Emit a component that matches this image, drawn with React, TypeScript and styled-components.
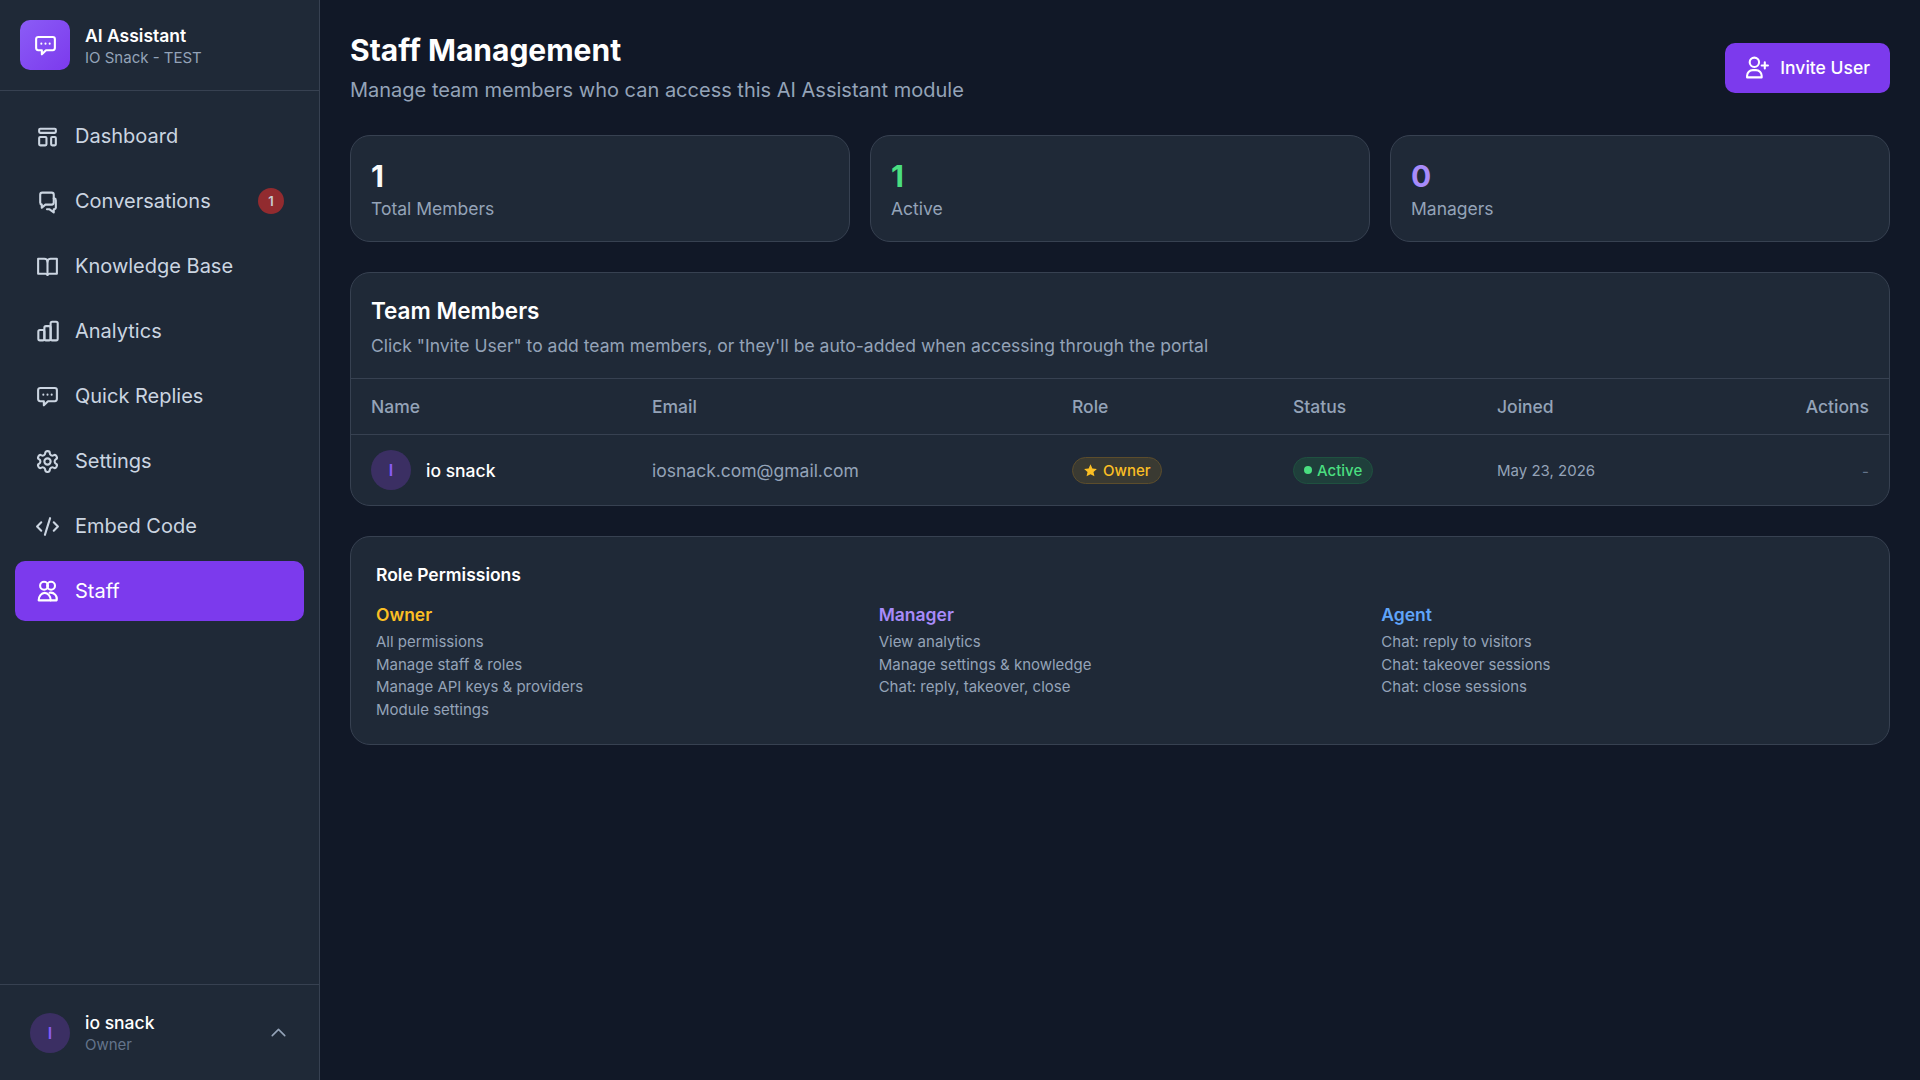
import React from 'react';
import styled, { createGlobalStyle } from 'styled-components';

const GlobalStyle = createGlobalStyle`
  html, body {
    margin: 0;
    padding: 0;
    height: 100%;
    background: #111827;
  }
  * {
    box-sizing: border-box;
  }
  body {
    font-family: Inter, "Liberation Sans", sans-serif;
    color: #f9fafb;
  }
`;

const Layout = styled.div`
  width: 100%;
  height: 1080px;
  display: flex;
  overflow: hidden;
  background: #111827;
`;

const Sidebar = styled.aside`
  width: 320px;
  flex-shrink: 0;
  height: 100%;
  display: flex;
  flex-direction: column;
  background: #1f2937;
  border-right: 1px solid #374151;
`;

const Brand = styled.div`
  height: 91px;
  padding: 20px;
  display: flex;
  align-items: center;
  gap: 15px;
  border-bottom: 1px solid #374151;
`;

const BrandLogo = styled.div`
  width: 50px;
  height: 50px;
  border-radius: 10px;
  display: flex;
  align-items: center;
  justify-content: center;
  color: #fff;
  background: linear-gradient(135deg, #8b5cf6, #7c3aed);
`;

const BrandText = styled.div`
  display: flex;
  flex-direction: column;
  padding-top: 3px;
`;

const BrandName = styled.span`
  font-size: 17.5px;
  line-height: 22px;
  font-weight: 600;
  color: #fff;
`;

const BrandSub = styled.span`
  font-size: 15px;
  line-height: 22px;
  color: #94a3b8;
`;

const Nav = styled.nav`
  flex: 1;
  padding: 15px;
  display: flex;
  flex-direction: column;
  gap: 5px;
`;

const NavItem = styled.a<{ $active?: boolean }>`
  height: 60px;
  padding: 0 20px;
  display: flex;
  align-items: center;
  gap: 15px;
  border-radius: 10px;
  font-size: 20px;
  color: ${({ $active }) => ($active ? '#fff' : '#cbd5e1')};
  background: ${({ $active }) => ($active ? '#7c3aed' : 'transparent')};
  & svg {
    flex-shrink: 0;
  }
`;

const NavLabel = styled.span`
  flex: 1;
`;

const NavBadge = styled.span`
  width: 26px;
  height: 26px;
  border-radius: 50%;
  display: flex;
  align-items: center;
  justify-content: center;
  font-size: 13px;
  font-weight: 600;
  color: #c8ccd2;
  background: #922b2f;
`;

const UserBar = styled.div`
  height: 96px;
  padding: 0 28px 0 30px;
  display: flex;
  align-items: center;
  gap: 15px;
  border-top: 1px solid #374151;
`;

const Avatar = styled.div`
  width: 40px;
  height: 40px;
  border-radius: 50%;
  flex-shrink: 0;
  display: flex;
  align-items: center;
  justify-content: center;
  font-size: 16px;
  font-weight: 600;
  color: #8b5cf6;
  background: #3b2f63;
`;

const UserText = styled.div`
  flex: 1;
  display: flex;
  flex-direction: column;
  padding-top: 2px;
`;

const UserName = styled.span`
  font-size: 17.5px;
  line-height: 22px;
  font-weight: 500;
  color: #fff;
`;

const UserRole = styled.span`
  font-size: 15px;
  line-height: 22px;
  color: #64748b;
`;

const Main = styled.main`
  flex: 1;
  padding: 30px;
  display: flex;
  flex-direction: column;
`;

const PageHeader = styled.header`
  display: flex;
  justify-content: space-between;
  align-items: center;
  height: 75px;
  margin-bottom: 30px;
`;

const TitleBlock = styled.div`
  display: flex;
  flex-direction: column;
  gap: 5px;
`;

const Title = styled.h1`
  margin: 0;
  font-size: 30px;
  line-height: 40px;
  font-weight: 700;
  color: #fff;
`;

const Subtitle = styled.p`
  margin: 0;
  font-size: 20px;
  line-height: 30px;
  color: #94a3b8;
`;

const InviteButton = styled.button`
  height: 50px;
  padding: 0 20px;
  border: none;
  border-radius: 10px;
  display: flex;
  align-items: center;
  gap: 10px;
  font-family: inherit;
  font-size: 17.5px;
  font-weight: 500;
  color: #fff;
  background: #7c3aed;
`;

const StatGrid = styled.div`
  display: grid;
  grid-template-columns: repeat(3, 1fr);
  gap: 20px;
  margin-bottom: 30px;
`;

const StatCard = styled.div`
  height: 107px;
  padding: 21px 20px 0;
  border: 1px solid #374151;
  border-radius: 20px;
  background: #1f2937;
`;

const StatValue = styled.div<{ $color: string }>`
  font-size: 30px;
  line-height: 39px;
  font-weight: 700;
  color: ${({ $color }) => $color};
`;

const StatLabel = styled.div`
  font-size: 17.5px;
  line-height: 26px;
  color: #94a3b8;
`;

const Card = styled.section`
  border: 1px solid #374151;
  border-radius: 20px;
  background: #1f2937;
  margin-bottom: 30px;
  overflow: hidden;
`;

const CardHead = styled.div`
  height: 106px;
  padding: 23px 20px 0;
  border-bottom: 1px solid #374151;
`;

const CardTitle = styled.h2`
  margin: 0;
  font-size: 22.5px;
  line-height: 30px;
  font-weight: 600;
  color: #fff;
`;

const CardHint = styled.p`
  margin: 5px 0 0;
  font-size: 17.5px;
  line-height: 30px;
  color: #94a3b8;
`;

const TeamTable = styled.table`
  width: 100%;
  border-collapse: collapse;
  table-layout: fixed;
`;

const HeadCell = styled.th<{ $width: number; $right?: boolean }>`
  width: ${({ $width }) => $width}px;
  height: 55px;
  padding: 0 20px;
  font-size: 17.5px;
  font-weight: 500;
  color: #94a3b8;
  text-align: ${({ $right }) => ($right ? 'right' : 'left')};
  border-bottom: 1px solid #374151;
`;

const BodyCell = styled.td<{ $right?: boolean }>`
  height: 71px;
  padding: 1px 20px 0;
  font-size: 17.5px;
  color: #94a3b8;
  text-align: ${({ $right }) => ($right ? 'right' : 'left')};
`;

const MemberCell = styled.div`
  display: flex;
  align-items: center;
  gap: 15px;
`;

const MemberName = styled.span`
  font-weight: 500;
  color: #fff;
`;

const DateText = styled.div`
  font-size: 15px;
`;

const Dash = styled.span`
  font-size: 15px;
  color: #64748b;
`;

const Pill = styled.span<{ $color: string; $bg: string; $border: string }>`
  display: inline-flex;
  align-items: center;
  vertical-align: middle;
  gap: 5px;
  height: 27px;
  padding: 0 10px;
  border-radius: 14px;
  font-size: 15px;
  font-weight: 500;
  color: ${({ $color }) => $color};
  background: ${({ $bg }) => $bg};
  border: 1px solid ${({ $border }) => $border};
`;

const Dot = styled.span`
  width: 8px;
  height: 8px;
  border-radius: 50%;
  background: #4ade80;
`;

const PermissionsCard = styled.section`
  padding: 25px 25px 23px;
  border: 1px solid #374151;
  border-radius: 20px;
  background: #1f2937;
`;

const PermissionsTitle = styled.h3`
  margin: 0 0 15px;
  font-size: 17.5px;
  line-height: 26px;
  font-weight: 600;
  color: #fff;
`;

const PermissionsGrid = styled.div`
  display: grid;
  grid-template-columns: repeat(3, 1fr);
  gap: 20px;
`;

const RoleName = styled.div<{ $color: string }>`
  font-size: 17.5px;
  line-height: 24px;
  font-weight: 600;
  margin-bottom: 4px;
  color: ${({ $color }) => $color};
`;

const PermissionLine = styled.div`
  font-size: 15px;
  line-height: 22.5px;
  color: #94a3b8;
`;

const Icon = ({ children, size = 25 }: { children: React.ReactNode; size?: number }) => (
  <svg
    width={size}
    height={size}
    viewBox="0 0 24 24"
    fill="none"
    stroke="currentColor"
    strokeWidth={2}
    strokeLinecap="round"
    strokeLinejoin="round"
  >
    {children}
  </svg>
);

const DashboardIcon = () => (
  <Icon>
    <rect x="4" y="4.5" width="16" height="4" rx="1" />
    <rect x="4" y="12.5" width="7" height="8" rx="1" />
    <rect x="15.5" y="12.5" width="4.5" height="8" rx="1" />
  </Icon>
);

const ConversationsIcon = () => (
  <Icon>
    <path d="M7 3.5h9a2 2 0 0 1 2 2v7.5a2 2 0 0 1-2 2h-6l-3.5 3v-3A2 2 0 0 1 5 13V5.500a2 2 0 0 1 2-2z" />
    <path d="M18 9h.5a2 2 0 0 1 1.500 2v7a2 2 0 0 1-1.500 1.500h-.5v3l-4-3h-2.500" />
  </Icon>
);

const BookIcon = () => (
  <Icon>
    <path d="M3 4.500h6a3 3 0 0 1 3 3 3 3 0 0 1 3-3h6V19h-7a2 2 0 0 0-2 1.200 2 2 0 0 0-2-1.200H3z" />
    <path d="M12 7.500v12.500" />
  </Icon>
);

const AnalyticsIcon = () => (
  <Icon>
    <rect x="3.2" y="10.500" width="5.800" height="10" rx="1.500" />
    <rect x="9" y="6.800" width="6" height="13.700" rx="1.500" />
    <rect x="15" y="2.600" width="6.800" height="17.900" rx="1.500" />
  </Icon>
);

const DotsChatIcon = () => (
  <Icon>
    <path d="M5 3.800h14a2 2 0 0 1 2 2v8.700a2 2 0 0 1-2 2h-6.500l-4 4v-4H5a2 2 0 0 1-2-2V5.800a2 2 0 0 1 2-2z" />
    <path d="M8 10.200h.01M12 10.200h.01M16 10.200h.01" />
  </Icon>
);

const SettingsIcon = () => (
  <Icon>
    <path d="M12.22 2h-.44a2 2 0 0 0-2 2v.18a2 2 0 0 1-1 1.73l-.43.25a2 2 0 0 1-2 0l-.15-.08a2 2 0 0 0-2.73.73l-.22.38a2 2 0 0 0 .73 2.73l.15.1a2 2 0 0 1 1 1.72v.51a2 2 0 0 1-1 1.74l-.15.09a2 2 0 0 0-.73 2.73l.22.38a2 2 0 0 0 2.73.73l.15-.08a2 2 0 0 1 2 0l.43.25a2 2 0 0 1 1 1.73V20a2 2 0 0 0 2 2h.44a2 2 0 0 0 2-2v-.18a2 2 0 0 1 1-1.73l.43-.25a2 2 0 0 1 2 0l.15.08a2 2 0 0 0 2.73-.73l.22-.39a2 2 0 0 0-.73-2.73l-.15-.08a2 2 0 0 1-1-1.74v-.5a2 2 0 0 1 1-1.74l.15-.09a2 2 0 0 0 .73-2.73l-.22-.38a2 2 0 0 0-2.73-.73l-.15.08a2 2 0 0 1-2 0l-.43-.25a2 2 0 0 1-1-1.73V4a2 2 0 0 0-2-2z" />
    <circle cx="12" cy="12" r="3" />
  </Icon>
);

const CodeIcon = () => (
  <Icon>
    <path d="m18 16 4-4-4-4" />
    <path d="m6 8-4 4 4 4" />
    <path d="m14.500 4-5 16" />
  </Icon>
);

const StaffIcon = () => (
  <Icon>
    <circle cx="8.700" cy="6.500" r="3.800" />
    <circle cx="15.400" cy="6.500" r="3.800" />
    <path d="M3.500 20.500a5.800 7.200 0 0 1 11.600 0z" />
    <path d="M14 13.200a6 6 0 0 1 6.800 7.300H15" />
  </Icon>
);

const InviteIcon = () => (
  <Icon>
    <circle cx="9" cy="7" r="4.500" />
    <path d="M2 21.500v-1.500a5.500 5.500 0 0 1 5.500-5.500h3a5.500 5.500 0 0 1 5.500 5.500v1.500z" />
    <path d="M19 7v6M16 10h6" />
  </Icon>
);

const ChevronUp = () => (
  <svg width="25" height="25" viewBox="0 0 24 24" fill="none" stroke="#94a3b8" strokeWidth={1.5} strokeLinecap="round" strokeLinejoin="round">
    <path d="m18 15-6-6-6 6" />
  </svg>
);

const StarIcon = () => (
  <svg width="15" height="15" viewBox="0 0 24 24" fill="currentColor">
    <path d="M12 2l3 6.600 7.200.8-5.400 4.800 1.500 7.100L12 17.800l-6.300 3.500 1.500-7.100L1.800 9.400 9 8.600z" />
  </svg>
);

const navItems = [
  { label: 'Dashboard', icon: <DashboardIcon /> },
  { label: 'Conversations', icon: <ConversationsIcon />, badge: 1 },
  { label: 'Knowledge Base', icon: <BookIcon /> },
  { label: 'Analytics', icon: <AnalyticsIcon /> },
  { label: 'Quick Replies', icon: <DotsChatIcon /> },
  { label: 'Settings', icon: <SettingsIcon /> },
  { label: 'Embed Code', icon: <CodeIcon /> },
  { label: 'Staff', icon: <StaffIcon />, active: true },
];

const stats = [
  { value: 1, label: 'Total Members', color: '#f9fafb' },
  { value: 1, label: 'Active', color: '#4ade80' },
  { value: 0, label: 'Managers', color: '#a78bfa' },
];

const roles = [
  {
    name: 'Owner',
    color: '#fbbf24',
    lines: ['All permissions', 'Manage staff & roles', 'Manage API keys & providers', 'Module settings'],
  },
  {
    name: 'Manager',
    color: '#a78bfa',
    lines: ['View analytics', 'Manage settings & knowledge', 'Chat: reply, takeover, close'],
  },
  {
    name: 'Agent',
    color: '#60a5fa',
    lines: ['Chat: reply to visitors', 'Chat: takeover sessions', 'Chat: close sessions'],
  },
];

const App: React.FC = () => {
  return (
    <Layout>
      <GlobalStyle />
      <Sidebar>
        <Brand>
          <BrandLogo>
            <DotsChatIcon />
          </BrandLogo>
          <BrandText>
            <BrandName>AI Assistant</BrandName>
            <BrandSub>IO Snack - TEST</BrandSub>
          </BrandText>
        </Brand>
        <Nav>
          {navItems.map((item) => (
            <NavItem key={item.label} $active={item.active}>
              {item.icon}
              <NavLabel>{item.label}</NavLabel>
              {item.badge ? <NavBadge>{item.badge}</NavBadge> : null}
            </NavItem>
          ))}
        </Nav>
        <UserBar>
          <Avatar>I</Avatar>
          <UserText>
            <UserName>io snack</UserName>
            <UserRole>Owner</UserRole>
          </UserText>
          <ChevronUp />
        </UserBar>
      </Sidebar>
      <Main>
        <PageHeader>
          <TitleBlock>
            <Title>Staff Management</Title>
            <Subtitle>Manage team members who can access this AI Assistant module</Subtitle>
          </TitleBlock>
          <InviteButton>
            <InviteIcon />
            Invite User
          </InviteButton>
        </PageHeader>
        <StatGrid>
          {stats.map((stat) => (
            <StatCard key={stat.label}>
              <StatValue $color={stat.color}>{stat.value}</StatValue>
              <StatLabel>{stat.label}</StatLabel>
            </StatCard>
          ))}
        </StatGrid>
        <Card>
          <CardHead>
            <CardTitle>Team Members</CardTitle>
            <CardHint>Click "Invite User" to add team members, or they'll be auto-added when accessing through the portal</CardHint>
          </CardHead>
          <TeamTable>
            <thead>
              <tr>
                <HeadCell $width={281}>Name</HeadCell>
                <HeadCell $width={420}>Email</HeadCell>
                <HeadCell $width={221}>Role</HeadCell>
                <HeadCell $width={204}>Status</HeadCell>
                <HeadCell $width={200}>Joined</HeadCell>
                <HeadCell $width={212} $right>Actions</HeadCell>
              </tr>
            </thead>
            <tbody>
              <tr>
                <BodyCell>
                  <MemberCell>
                    <Avatar>I</Avatar>
                    <MemberName>io snack</MemberName>
                  </MemberCell>
                </BodyCell>
                <BodyCell>iosnack.com@gmail.com</BodyCell>
                <BodyCell>
                  <Pill $color="#fbbf24" $bg="#3a3a32" $border="#5c4d2c">
                    <StarIcon />
                    Owner
                  </Pill>
                </BodyCell>
                <BodyCell>
                  <Pill $color="#4ade80" $bg="#1f3f3b" $border="#1f5140">
                    <Dot />
                    Active
                  </Pill>
                </BodyCell>
                <BodyCell>
                  <DateText>May 23, 2026</DateText>
                </BodyCell>
                <BodyCell $right>
                  <Dash>-</Dash>
                </BodyCell>
              </tr>
            </tbody>
          </TeamTable>
        </Card>
        <PermissionsCard>
          <PermissionsTitle>Role Permissions</PermissionsTitle>
          <PermissionsGrid>
            {roles.map((role) => (
              <div key={role.name}>
                <RoleName $color={role.color}>{role.name}</RoleName>
                {role.lines.map((line) => (
                  <PermissionLine key={line}>{line}</PermissionLine>
                ))}
              </div>
            ))}
          </PermissionsGrid>
        </PermissionsCard>
      </Main>
    </Layout>
  );
};

export default App;
